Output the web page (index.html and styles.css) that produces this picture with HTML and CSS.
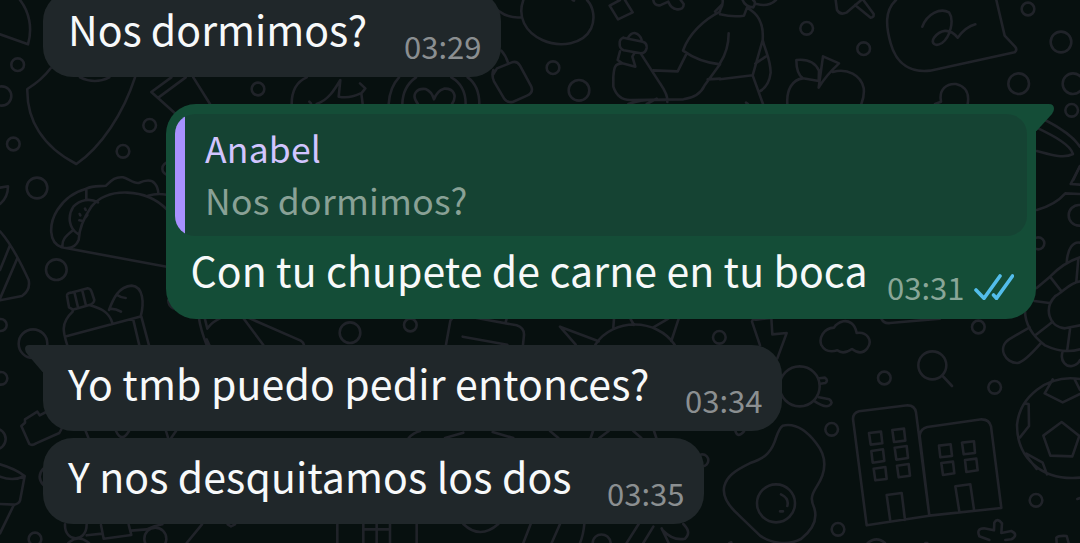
FILE: index.html
```html
<!DOCTYPE html>
<html lang="es">
<head>
<meta charset="utf-8">
<title>Chat</title>
<link rel="stylesheet" href="styles.css">
</head>
<body>
<svg class="wallpaper" viewBox="0 0 1080 543" aria-hidden="true">
  <!-- upper left: wing, shield, taco -->
  <g transform="scale(.33333)">
    <path d="M60 0C88 36 98 84 84 133L0 103M152 205C130 234 107 252 82 267C80 360 128 440 229 492C304 440 370 340 405 232M240 232Q285 254 328 232M514 232L454 276L525 340M557 232L476 292M580 232L630 312M875 312C875 275 888 246 920 232M928 305l5 5M950 312C985 300 1003 270 1021 240L1016 290Q1050 296 1080 281"/>
    <circle cx="53" cy="194" r="19"/><circle cx="5" cy="288" r="29"/><circle cx="40" cy="432" r="19"/><circle cx="449" cy="376" r="19"/><circle cx="369" cy="454" r="19"/><circle cx="111" cy="564" r="31"/><circle cx="774" cy="267" r="19"/><circle cx="506" cy="506" r="19"/>
    <path d="M0 563L24 559C24 585 15 600 0 612"/>
    <path d="M500 800L185 742C145 728 146 672 172 630C195 594 225 575 259 566C280 556 300 560 318 557C333 543 345 529 369 532C387 537 400 551 416 549C432 542 453 537 464 550Q474 561 475 580M259 566V600M294 607C268 593 240 600 220 620C202 648 206 684 234 702M500 628C438 565 324 560 274 620C250 655 237 690 236 720Q226 744 202 744M217 692C197 708 184 721 188 742M444 587Q470 579 500 584M239 642l2 4M255 626l2 4M262 645l-5 7M238 661l10 2"/>
  </g>
  <!-- left: cone, bottle and loaf -->
  <g transform="translate(0 120) scale(.33333)">
    <path d="M0 334C36 374 61 425 86 480Q92 510 66 528L0 541M30 376L0 450M52 415L0 536"/>
    <circle cx="169" cy="449" r="31"/><circle cx="2" cy="615" r="18"/><circle cx="99" cy="671" r="43"/>
    <path d="M202 676C190 640 180 610 218 575V568L207 562L201 528Q200 519 213 518L263 505Q272 506 275 516L283 540Q282 551 268 555L218 569M224 520L234 562M247 512L258 557M268 555C300 565 326 573 337 609M199 649L419 590M399 596L418 676M424 590L447 676M327 570C340 535 356 500 395 497C430 500 433 548 422 590M353 526Q363 534 377 534M330 566Q350 567 363 575"/>
  </g>
  <!-- strip between the outgoing bubble and the next one -->
  <g transform="translate(160 300) scale(.33333)">
    <path d="M25 0Q24 16 40 25M116 50Q122 90 140 135M133 50L142 86Q155 66 180 55M140 118L148 135M248 52L310 135M262 52L422 122Q430 127 432 135"/>
  </g>
  <!-- top centre: rings, tag, balloon, bottle, person -->
  <g transform="translate(360 0) scale(.33333)">
    <path d="M86 312C88 280 98 252 117 232M127 312C128 272 145 248 168 232M274 232C302 248 317 275 317 312M323 232C348 250 358 278 358 312M174 312C151 284 170 264 197 267Q215 274 222 298Q231 272 252 266C282 264 292 288 276 312M0 250L16 265L4 280L8 312M400 210Q394 226 402 244L432 295Q440 308 458 306L501 287Q521 278 514 260L480 197Q471 182 456 187L411 205L398 226M424 152Q437 166 444 188M414 32Q445 55 482 52M490 0C472 50 495 96 547 120C602 145 670 132 693 86C707 55 700 20 681 0M638 0l4 2M749 17L774 58L818 37L795 0M749 17L780 0M880 0Q882 18 900 16L925 5Q933 25 950 28Q972 30 971 12L962 0"/>
    <circle cx="579" cy="203" r="19"/><circle cx="657" cy="271" r="31"/>
    <path d="M803 115Q812 98 824 99Q840 103 845 120M790 113L848 125Q862 129 860 144Q857 160 842 160L791 151Q778 146 779 130Q778 118 790 113M780 154L773 180L787 190M787 190C763 190 762 205 760 230V260Q773 300 810 300L970 298Q1018 292 1034 256L1080 193M787 190L826 200L817 170L824 158M842 160L900 250Q925 286 922 306M880 211L953 214L980 160M1080 35C1030 60 986 103 969 152Q1018 187 1080 193M1043 238L1080 236M805 312Q850 295 915 300M860 312l30-16M1065 35l20-20"/>
  </g>
  <!-- top right: figure, apple, sticker, orbit -->
  <g transform="translate(720 0) scale(.33333)">
    <path d="M0 43Q38 52 72 47L81 23C111 40 132 65 128 120L98 226L129 312M0 238L98 226M26 100Q26 150 0 190M128 120C138 160 151 176 152 218Q147 258 121 273M106 191L137 170M8 0Q10 15 0 32M68 0Q75 20 100 22Q110 6 99 0M110 12Q145 22 168 0M78 308l6 4M347 0L351 30Q360 46 379 38L424 0M405 15L452 53Q462 53 461 42L430 0M528 0C493 32 498 80 512 130C530 195 575 218 630 212L884 157Q893 149 885 140L854 107L829 0M607 80C621 42 660 22 687 37C704 61 690 112 666 129C646 142 631 130 643 112C660 91 687 81 713 113Q738 80 766 73M202 312C199 270 217 238 249 235M249 235C232 224 229 202 229 180C263 176 286 188 297 212L296 243L249 235M296 263L309 169L357 190Q317 227 296 263M338 216C382 203 423 226 431 264Q434 286 424 312M645 312L663 305C656 267 680 250 708 252C740 259 748 284 743 312M975 360C1018 382 1060 410 1080 440M950 383C1004 409 1052 435 1059 462C1030 478 985 462 950 453M1080 498L1060 540"/>
    <circle cx="260" cy="85" r="19"/><circle cx="431" cy="146" r="19"/><circle cx="924" cy="27" r="19"/><circle cx="1023" cy="126" r="31"/><circle cx="896" cy="251" r="31"/><circle cx="1059" cy="251" r="31"/><circle cx="1055" cy="331" r="19"/>
  </g>
  <!-- right edge below the orbit -->
  <g transform="translate(960 90) scale(.33333)">
    <path d="M360 228L332 282L360 284M230 360Q285 345 316 310L360 312"/>
    <circle cx="357" cy="376" r="31"/><circle cx="235" cy="460" r="18"/>
  </g>
  <!-- turtle -->
  <g transform="translate(860 230) scale(.33333)">
    <path d="M620 99C622 55 640 34 660 38M660 82Q610 98 570 140L530 174M570 140L605 185M655 86L649 155M660 154C628 158 610 186 586 198C550 235 567 292 615 295L660 286M523 213L568 219M495 235C493 283 520 320 555 346Q610 372 660 358M527 315L578 275M630 298L622 358M509 292L447 328C410 354 437 400 472 399Q492 397 542 340M607 368C600 395 620 411 636 408Q655 404 660 390M64 266Q72 282 90 279L240 266"/>
    <circle cx="355" cy="291" r="19"/><circle cx="217" cy="406" r="42"/>
  </g>
  <!-- lower right: bolt, cloud, lens, egg, buildings, ball -->
  <g transform="translate(700 310) scale(.33333)">
    <path d="M180 106L156 35Q157 26 168 29L214 24L217 73L260 69L232 145M402 53C370 55 356 84 364 105Q378 131 412 121Q430 135 456 117Q483 138 502 115C520 91 500 64 470 69C465 40 445 31 430 34Q410 39 402 53ZM728 198L756 228"/>
    <circle cx="58" cy="82" r="19"/><circle cx="553" cy="204" r="19"/><circle cx="884" cy="232" r="19"/><circle cx="299" cy="229" r="60"/><circle cx="395" cy="358" r="19"/><circle cx="414" cy="658" r="19"/><circle cx="1008" cy="571" r="19"/><circle cx="7" cy="451" r="18"/><circle cx="228" cy="580" r="57"/>
    <path d="M358 205L375 203Q386 212 376 219L361 221M357 262L388 268Q402 278 387 287Q373 294 341 272M106 362Q112 386 132 364M243 553Q268 565 262 588M240 604h9M503 699Q530 677 555 699M88 699l6-2M676 699h6M1140 564l-8 3"/>
    <path d="M248 347C286 338 322 364 350 401C383 443 378 487 350 530C331 559 333 572 343 595C354 631 337 660 303 687C261 709 211 698 180 677L114 613C83 585 66 557 73 528C81 498 104 482 149 460C188 446 209 435 224 395C232 373 235 357 248 347Z"/>
    <path d="M500 646L459 327Q459 309 477 304L623 286Q644 286 648 307L688 617ZM688 617L659 377Q662 355 682 351L845 328Q868 328 873 349L904 594ZM507 369L543 365L547 400L512 404ZM577 360L612 356L616 392L582 396ZM514 423L549 418L553 453L518 458ZM584 413L620 408L624 444L589 449ZM521 476L556 471L560 507L526 511ZM591 467L626 462L630 497L596 502ZM717 407L752 403L756 438L721 442ZM786 398L822 394L825 429L791 433ZM724 459L759 455L763 490L729 495ZM795 450L829 446L833 481L799 486ZM571 634L560 555L605 549L615 630M778 605L766 529L811 523L822 599"/>
    <path d="M1140 207C1040 192 959 262 951 345C951 442 1022 513 1140 503M1058 208L1034 250L1088 277L1140 252M1124 208L1140 240M977 281L986 282L987 348L960 382M979 431L1028 458L1041 493M980 438L1010 477M1085 336L1138 378L1117 439L1051 437L1030 377ZM868 690L838 679Q828 655 852 655L882 661L883 638Q892 622 906 640L904 669L934 663Q957 674 934 688L916 690M1070 699L1069 683Q1076 676 1100 678L1106 699"/>
  </g>
  <!-- lower left -->
  <g transform="translate(0 330) scale(.33333)">
    <path d="M75 268L112 245L119 256L138 246M75 268V278L64 288L88 342Q97 348 108 340L178 309L186 294M0 403Q45 416 74 438L60 512Q57 521 43 524L0 522M0 440Q40 455 74 438M40 528L0 610M257 303l8 20M348 303Q365 340 387 303M498 303L504 323M528 303L514 323M130 416Q108 440 130 465M195 583C193 638 260 640 260 583M260 616L307 611M303 585L311 626L394 615L386 584M393 602L440 598Q460 588 487 583M606 583L560 639M683 583l10 6l12-6M1012 583V639M1090 583V639M1170 583V639M1090 598H1170M1130 583V639M205 639Q235 612 267 639"/>
    <circle cx="1050" cy="8" r="31"/><circle cx="3" cy="145" r="19"/><circle cx="-14" cy="327" r="31"/><circle cx="105" cy="627" r="19"/><circle cx="466" cy="626" r="33"/>
  </g>
  <!-- lower centre: card, sun, fragments between bubbles -->
  <g transform="translate(400 310) scale(.33333)">
    <path d="M138 104L151 32L158 24M230 24L350 46Q373 54 372 75L369 104M188 80L322 104M320 26L316 40M527 104L480 50L596 94M586 104C640 22 770 25 824 104M642 26L640 52M691 26L702 45M760 52L805 26M836 26L814 93M26 384Q40 368 60 363M135 384L190 368M278 366L340 384M450 363L475 384M572 384L579 363M598 384L626 363M700 363L724 384M762 363L769 384M50 642V699M190 642Q240 690 295 642M392 642L370 699M480 642L455 699M553 642Q550 675 540 699M578 699C580 665 628 665 632 699M716 642L680 699M760 650L730 699M785 655L806 699M787 660Q820 694 855 686Q876 668 850 642"/>
    <circle cx="31" cy="45" r="19"/>
  </g>
</svg>

<main class="chat">
  <div class="bubble incoming first">
    <span class="text">Nos dormimos?</span><time class="time">03:29</time>
  </div>

  <div class="bubble outgoing">
    <svg class="tail tail-right" viewBox="0 0 20 28"><path d="M0 0H13Q18 0 18 5Q18 7 16 10L.5 27H0Z"/></svg>
    <div class="quote">
      <div class="quote-name">Anabel</div>
      <div class="quote-text">Nos dormimos?</div>
    </div>
    <div class="line">
      <span class="text">Con tu chupete de carne en tu boca</span>
      <span class="time">03:31</span>
      <svg class="ticks" viewBox="0 0 40 26"><path d="M2 16L10 24.300L26 2M19.500 21L22.500 24.300L38.500 2"/></svg>
    </div>
  </div>

  <div class="bubble incoming third">
    <svg class="tail tail-left" viewBox="0 0 18 28"><path d="M18 0H4Q0 0 0 4Q0 7 3 10L17.500 27H18Z"/></svg>
    <span class="text">Yo tmb puedo pedir entonces?</span><time class="time">03:34</time>
  </div>

  <div class="bubble incoming fourth">
    <span class="text">Y nos desquitamos los dos</span><time class="time">03:35</time>
  </div>
</main>
</body>
</html>
```

FILE: styles.css
```css
html, body {
  margin: 0;
  height: 543px;
  overflow: hidden;
}

body {
  position: relative;
  background: #07100f;
  font-family: "Noto Sans CJK SC", "Noto Sans", sans-serif;
}

.wallpaper {
  position: absolute;
  inset: 0;
  width: 1080px;
  height: 543px;
  fill: none;
  stroke: #202329;
  stroke-width: 7.8;
  stroke-linecap: round;
  stroke-linejoin: round;
}

.chat {
  position: relative;
  display: flex;
  flex-direction: column;
  align-items: flex-start;
  margin-top: -9px;
  padding: 0 44px 0 43px;
}

.bubble {
  position: relative;
  box-sizing: border-box;
  border-radius: 30px;
}

.incoming {
  display: flex;
  justify-content: space-between;
  align-items: flex-start;
  height: 86px;
  padding: 0 19.500px 0 25px;
  background: #20272a;
}

.first { width: 458px; }
.third { width: 739px; margin-top: 26.500px; border-top-left-radius: 0; }
.fourth { width: 661px; margin-top: 7px; }

.outgoing {
  align-self: flex-end;
  width: 870px;
  height: 214.500px;
  margin-top: 27px;
  padding: 9.500px 9.500px 9.500px 9px;
  border-top-right-radius: 0;
  background: #144d37;
}

.text {
  margin-top: 11px;
  font-size: 41px;
  line-height: 53px;
  letter-spacing: 0.1px;
  color: #f7f9fa;
  white-space: nowrap;
}

.first .text { letter-spacing: 0; }
.third .text { letter-spacing: 0.15px; }

.time {
  margin-top: 34.500px;
  font-size: 31px;
  line-height: 40px;
  color: #8b8f91;
  white-space: nowrap;
}

.quote {
  box-sizing: border-box;
  height: 122.500px;
  padding: 8.500px 0 0 30px;
  border-radius: 20px;
  background: linear-gradient(to right, #a791ff 10px, #154333 10px);
}

.quote-name,
.quote-text {
  font-size: 35.500px;
  line-height: 51px;
  letter-spacing: 0.2px;
  color: #d2c5ff;
}

.quote-text {
  margin-top: 1px;
  letter-spacing: 0.27px;
  color: #89a196;
}

.line {
  display: flex;
  align-items: flex-start;
  padding-left: 15.500px;
}

.line .text { margin-top: 6.500px; }

.line .time {
  margin: 30.500px 9px 0 auto;
  color: #89a698;
}

.ticks {
  width: 40px;
  height: 26px;
  margin: 37.500px 13px 0 0;
  fill: none;
  stroke: #53bdeb;
  stroke-width: 3.600;
  stroke-linecap: round;
  stroke-linejoin: miter;
}

.tail {
  position: absolute;
  top: 0;
  height: 28px;
}

.tail-right { left: 870px; width: 20px; fill: #144d37; }
.tail-left { right: 739px; width: 18px; fill: #20272a; }
```
